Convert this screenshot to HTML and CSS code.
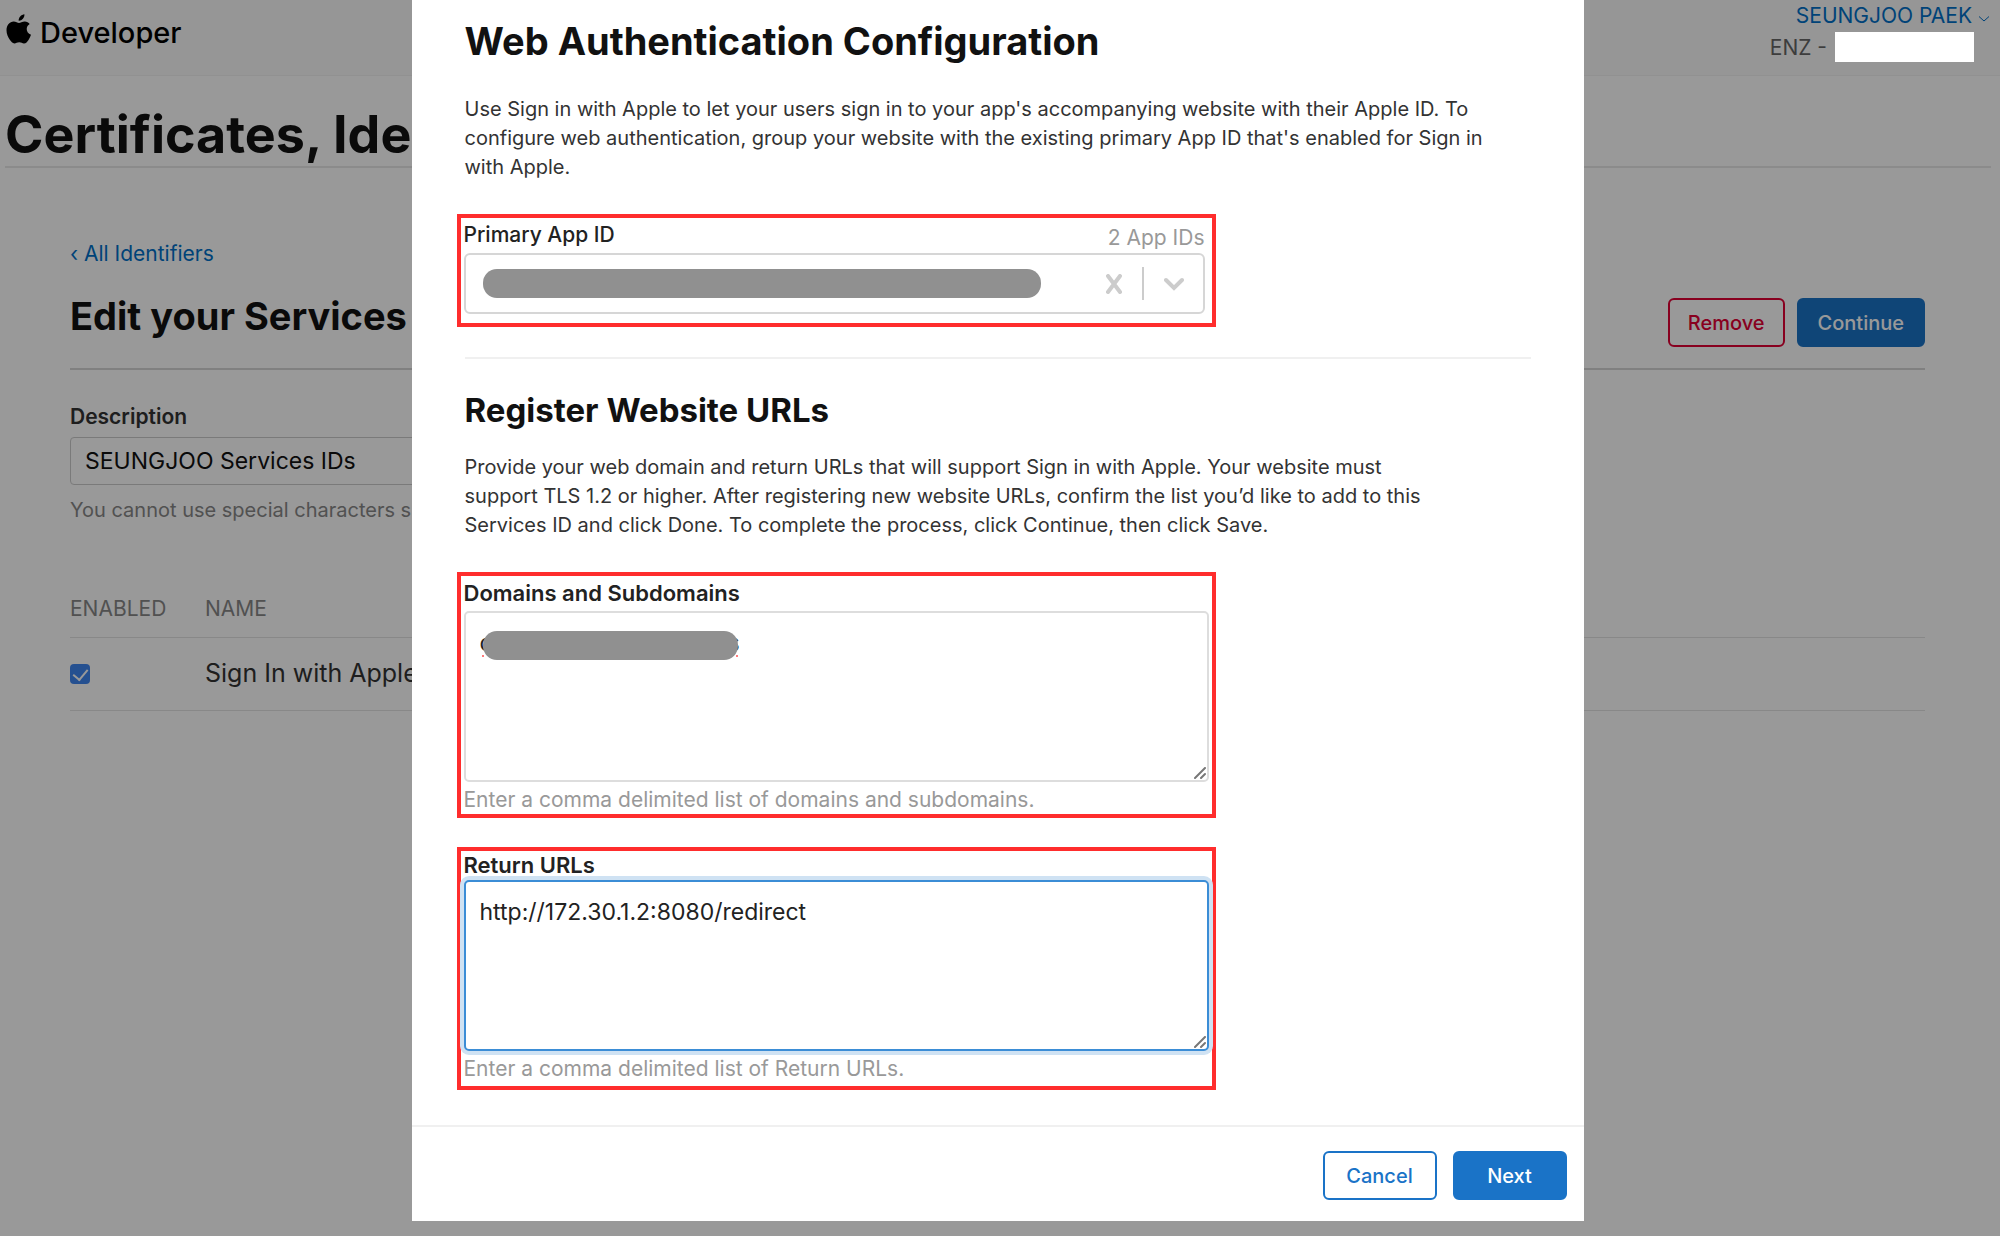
FILE: index.html
```html
<!DOCTYPE html>
<html lang="en">
<head>
    <meta charset="UTF-8">
    <meta name="viewport" content="width=device-width, initial-scale=1.0">
    <title>Certificates, Identifiers &amp; Profiles</title>
    <link rel="stylesheet" href="styles.css">
</head>
<body>
    <!-- Page behind the dialog -->
    <header class="topbar">
        <a class="brand" href="#">
            <svg class="brand-logo" viewBox="0 0 26 30" aria-hidden="true">
                <path d="M18.4 0.2c.2 1.7-.5 3.3-1.5 4.5-1 1.200-2.700 2.100-4.200 2-.2-1.600.6-3.300 1.500-4.300C15.200 1.200 17 .3 18.400.2z"/>
                <path d="M23.700 10.100c-1.800 1.100-3 2.800-3 5 0 2.500 1.500 4.700 4.300 5.700-.5 1.700-1.400 3.500-2.500 5.100-1.200 1.800-2.500 3.500-4.500 3.500-1.900 0-2.500-1.200-4.800-1.200-2.200 0-3 1.200-4.800 1.200-1.900 0-3.300-1.800-4.600-3.600C2.100 23.400.5 19.800.5 16.200.5 11.200 3.700 7.500 7.700 7.500c2.200 0 3.900 1.400 5.300 1.400 1.300 0 3.300-1.500 5.800-1.500 2 0 3.800 1 4.900 2.700z"/>
            </svg>
            <span>Developer</span>
        </a>
        <div class="account">
            <a class="account-name" href="#">SEUNGJOO PAEK
                <svg class="account-arrow" viewBox="0 0 12 8" aria-hidden="true"><path d="M1 1.500l5 4.500 5-4.500"/></svg>
            </a>
            <div class="account-team">ENZ - <span class="team-mask"></span></div>
        </div>
    </header>

    <main>
        <h1 class="page-title">Certificates, Identifiers &amp; Profiles</h1>
        <div class="content">
            <a class="back-link" href="#">‹ All Identifiers</a>
            <div class="content-head">
                <h2>Edit your Services ID Configuration</h2>
                <div class="actions">
                    <button class="btn btn-danger" type="button">Remove</button>
                    <button class="btn btn-primary" type="button">Continue</button>
                </div>
            </div>
            <label class="desc-label" for="description">Description</label>
            <input class="desc-input" type="text" id="description" value="SEUNGJOO Services IDs">
            <p class="desc-hint">You cannot use special characters such as @, &amp;, *, ', "</p>
            <table class="services">
                <thead>
                    <tr><th class="col-enabled">ENABLED</th><th>NAME</th></tr>
                </thead>
                <tbody>
                    <tr>
                        <td><input class="check" type="checkbox" id="signin" checked></td>
                        <td><label for="signin">Sign In with Apple</label></td>
                    </tr>
                </tbody>
            </table>
        </div>
    </main>

    <!-- Dialog -->
    <div class="overlay">
        <div class="modal" role="dialog" aria-labelledby="modalTitle">
            <div class="modal-body">
                <h2 class="modal-title" id="modalTitle">Web Authentication Configuration</h2>
                <p class="modal-text">Use Sign in with Apple to let your users sign in to your app's accompanying website with their Apple ID. To configure web authentication, group your website with the existing primary App ID that's enabled for Sign in with Apple.</p>

                <div class="field field-app">
                    <div class="field-row">
                        <label for="appId">Primary App ID</label>
                        <span class="count">2 App IDs</span>
                    </div>
                    <div class="picker">
                        <select id="appId"><option></option></select>
                        <span class="mask"></span>
                        <div class="picker-icons">
                            <svg class="icon-clear" viewBox="0 0 16 20" aria-hidden="true"><path d="M2 2l12 16M14 2L2 18"/></svg>
                            <span class="picker-line"></span>
                            <svg class="icon-down" viewBox="0 0 20 14" aria-hidden="true"><path d="M2 3l8 8 8-8"/></svg>
                        </div>
                    </div>
                </div>

                <hr class="divider">

                <h3 class="modal-subtitle">Register Website URLs</h3>
                <p class="modal-text register-text">Provide your web domain and return URLs that will support Sign in with Apple. Your website must support TLS 1.2 or higher. After registering new website URLs, confirm the list you’d like to add to this Services ID and click Done. To complete the process, click Continue, then click Save.</p>

                <div class="field">
                    <label for="domains">Domains and Subdomains</label>
                    <div class="area">
                        <textarea id="domains" spellcheck="false">c                                    &#8202;s</textarea>
                        <span class="mask mask-short"></span>
                        <svg class="grip" viewBox="0 0 12 12" aria-hidden="true"><path d="M1 11L11 1M7 11l4-4"/></svg>
                    </div>
                    <p class="hint">Enter a comma delimited list of domains and subdomains.</p>
                </div>

                <div class="field field-return">
                    <label for="returnUrls">Return URLs</label>
                    <div class="area">
                        <textarea class="active" id="returnUrls" spellcheck="false">http://172.30.1.2:8080/redirect</textarea>
                        <svg class="grip" viewBox="0 0 12 12" aria-hidden="true"><path d="M1 11L11 1M7 11l4-4"/></svg>
                    </div>
                    <p class="hint">Enter a comma delimited list of Return URLs.</p>
                </div>
            </div>
            <div class="modal-footer">
                <button class="btn btn-outline" type="button">Cancel</button>
                <button class="btn btn-primary" type="button">Next</button>
            </div>
        </div>
    </div>
</body>
</html>
```
FILE: styles.css
```css
/* General Styling */
* {
    box-sizing: border-box;
}
body {
    font-family: Inter, "Liberation Sans", sans-serif;
    font-size: 20px;
    line-height: 29px;
    color: #333;
    background: #fff;
    margin: 0;
    height: 100vh;
    overflow: hidden;
}
h1, h2, h3, p {
    margin: 0;
}
a {
    color: #0070c9;
    text-decoration: none;
}
input, select, textarea, button {
    font-family: inherit;
}

/* Top bar */
.topbar {
    display: flex;
    justify-content: space-between;
    height: 76px;
    padding: 0 10px 0 6px;
    background: #fafafa;
    border-bottom: 1px solid #f2f2f2;
}
.brand {
    display: flex;
    gap: 8px;
    align-items: center;
    height: 64px;
    font-size: 29px;
    font-weight: 500;
    color: #000;
}
.brand-logo {
    width: 26px;
    height: 30px;
    margin-bottom: 6px;
}
.account {
    font-size: 21px;
    text-align: right;
    line-height: 32px;
}
.account-name {
    display: block;
}
.account-arrow {
    width: 12px;
    height: 8px;
    fill: none;
    stroke: #0070c9;
}
.account-team {
    display: flex;
    gap: 8px;
    justify-content: flex-end;
    color: #666;
    padding-right: 16px;
}
/* stays white above the overlay */
.team-mask {
    position: relative;
    z-index: 2;
    width: 139px;
    height: 30px;
    background: #fff;
}

/* Page content */
.page-title {
    margin: 0 9px 0 5px;
    padding-top: 28px;
    height: 92px;
    font-size: 52px;
    line-height: 62px;
    font-weight: 700;
    color: #111;
    border-bottom: 2px solid #e8e8e8;
}
.content {
    padding: 71px 75px 0 70px;
}
.back-link {
    display: block;
    font-size: 21px;
}
.content-head {
    display: flex;
    justify-content: space-between;
    align-items: flex-end;
    height: 102px;
    padding-bottom: 21px;
    border-bottom: 2px solid #d6d6d6;
}
.content-head h2 {
    font-size: 38px;
    line-height: 62px;
    color: #111;
}
.actions {
    display: flex;
    gap: 12px;
}
.desc-label {
    display: block;
    margin-top: 32px;
    font-size: 21px;
    font-weight: 600;
}
.desc-input {
    display: block;
    width: 50%;
    height: 48px;
    margin: 6px 0 11px;
    padding: 0 14px;
    font-size: 23px;
    color: #111;
    background: #fff;
    border: 1px solid #ccc;
    border-radius: 4px;
}
.desc-hint {
    color: #888;
}
.services {
    width: 100%;
    margin-top: 56px;
    border-collapse: collapse;
}
.services th {
    height: 56px;
    padding: 0;
    font-size: 21px;
    font-weight: 400;
    text-align: left;
    color: #888;
    border-bottom: 1px solid #e3e3e3;
}
.services td {
    height: 73px;
    padding: 0;
    font-size: 25px;
    border-bottom: 1px solid #e3e3e3;
}
.services .col-enabled {
    width: 135px;
}
.check {
    display: flex;
    justify-content: center;
    width: 20px;
    height: 20px;
    margin: 0;
    appearance: none;
    background: #3f85f0;
    border-radius: 4px;
}
.check:checked::after {
    content: "";
    width: 7px;
    height: 12px;
    margin-top: 2px;
    border: solid #fff;
    border-width: 0 2px 2px 0;
    transform: rotate(40deg);
}

/* Buttons */
.btn {
    min-width: 114px;
    height: 49px;
    padding: 0 18px;
    font-size: 20px;
    font-weight: 500;
    border: 2px solid;
    border-radius: 6px;
    cursor: pointer;
}
.btn-primary {
    padding: 0 19px;
    color: #fff;
    background: #1a73c7;
    border-color: #1a73c7;
}
.btn-outline {
    color: #1a73c7;
    background: #fff;
    border-color: #1a73c7;
}
.btn-danger {
    color: #e30035;
    background: transparent;
    border-color: #e30035;
}

/* Dialog */
.overlay {
    position: absolute;
    top: 0;
    right: 0;
    bottom: 4px;
    left: 0;
    padding: 0 5px 0 0;
    background: rgba(0, 0, 0, 0.4);
}
.modal {
    width: 59%;
    max-width: 1172px;
    margin: 0 auto;
    background: #fff;
}
.modal-body {
    padding: 16px 53px 35px 45px;
}
.modal-title {
    padding-left: 8px;
    font-size: 38px;
    line-height: 50px;
    color: #111;
}
.modal-text {
    padding: 0 8px;
    margin: 29px 0 32px;
}
.register-text {
    max-width: 1000px;
    margin-top: 23px;
}
.field {
    width: 759px;
    max-width: 100%;
    padding: 0 3px;
    border: 4px solid #ff2d2d;
}
.field label {
    display: block;
    font-size: 22px;
    line-height: 35px;
    font-weight: 600;
    color: #222;
}
.field-app {
    padding-bottom: 9px;
}
.field-app label {
    font-size: 21px;
    font-weight: 500;
    line-height: 33px;
}
.field-row {
    display: flex;
    justify-content: space-between;
    width: 741px;
    height: 35px;
}
.count, .hint {
    font-size: 21px;
    color: #999;
}
.count {
    line-height: 39px;
}
.hint {
    padding-top: 3px;
}
.field-return {
    margin-top: 29px;
    padding-bottom: 3px;
}
.field-return label {
    line-height: 29px;
}
.picker {
    position: relative;
    width: 741px;
}
.picker select {
    display: block;
    width: 100%;
    height: 61px;
    appearance: none;
    background: #fff;
    border: 2px solid #d6d6d6;
    border-radius: 6px;
}
.mask {
    position: absolute;
    top: 16px;
    left: 19px;
    width: 558px;
    height: 29px;
    background: #909090;
    border-radius: 14px;
}
.mask-short {
    top: 20px;
    width: 255px;
}
/* ends of the spelling underline */
.mask-short::before, .mask-short::after {
    content: "";
    position: absolute;
    bottom: 3px;
    width: 2px;
    height: 2px;
    background: #ff7b7b;
}
.mask-short::before {
    left: -1px;
}
.mask-short::after {
    right: 0;
}
.picker-icons {
    position: absolute;
    top: 0;
    right: 21px;
    display: flex;
    align-items: center;
    gap: 20px;
    height: 61px;
}
.picker-icons svg, .grip {
    fill: none;
    stroke: #ccc;
    stroke-width: 4;
    stroke-linecap: round;
}
.icon-clear {
    width: 16px;
    height: 20px;
}
.icon-down {
    width: 20px;
    height: 14px;
}
.picker-line {
    width: 2px;
    height: 33px;
    background: #ccc;
}
.divider {
    height: 2px;
    margin: 30px 0 31px 8px;
    border: 0;
    background: #f0f0f0;
}
.modal-subtitle {
    padding-left: 8px;
    font-size: 33px;
    line-height: 40px;
    color: #111;
}
.area {
    position: relative;
}
textarea {
    display: block;
    width: 100%;
    height: 171px;
    padding: 16px 14px;
    font-size: 23px;
    line-height: 29px;
    color: #222;
    border: 2px solid #ddd;
    border-radius: 5px;
    resize: none;
    outline: none;
}
textarea.active {
    border-color: #3b8dd6;
    box-shadow: 0 0 0 4px #cfe2f3;
}
.grip {
    position: absolute;
    right: 3px;
    bottom: 3px;
    width: 12px;
    height: 12px;
}
.grip path {
    stroke: #777;
    stroke-width: 2;
}
.modal-footer {
    display: flex;
    justify-content: flex-end;
    gap: 16px;
    padding: 24px 17px 21px;
    border-top: 2px solid #f0f0f0;
}
```
